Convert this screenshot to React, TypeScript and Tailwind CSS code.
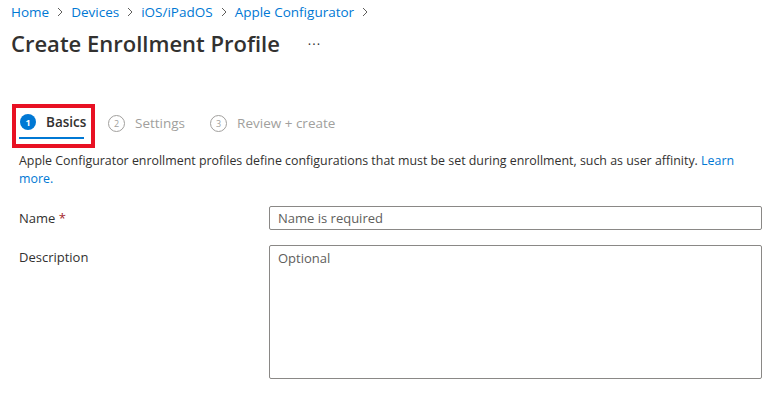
import React from 'react';

const font = { fontFamily: '"Segoe UI", "Open Sans", "Liberation Sans", sans-serif' };

const Chevron = () => (
  <svg width="8" height="10" viewBox="0 0 8 10" className="mx-[7px] text-[#605e5c]">
    <path d="M2 1 L6 5 L2 9" fill="none" stroke="currentColor" strokeWidth="1" />
  </svg>
);

const StepCircle: React.FC<{ n: number; active?: boolean }> = ({ n, active }) =>
  active ? (
    <span className="flex h-[16px] w-[16px] items-center justify-center rounded-full bg-[#0078d4] text-[9px] font-bold text-white">
      {n}
    </span>
  ) : (
    <span className="flex h-[17px] w-[17px] items-center justify-center rounded-full border border-[#a19f9d] text-[9px] text-[#a19f9d]">
      {n}
    </span>
  );

export default function App() {
  const crumbs = ['Home', 'Devices', 'iOS/iPadOS', 'Apple Configurator'];

  return (
    <div className="h-[395px] w-[775px] overflow-hidden bg-white text-[#323130]" style={font}>
      <nav className="flex items-center pl-[11px] pt-[2px] text-[13.5px] text-[#0078d4]">
        {crumbs.map(c => (
          <React.Fragment key={c}>
            <span>{c}</span>
            <Chevron />
          </React.Fragment>
        ))}
      </nav>

      <div className="mt-[6px] flex items-center pl-[11px]">
        <h1 className="text-[22px] font-semibold leading-[30px] text-[#323130]">Create Enrollment Profile</h1>
        <span className="ml-[28px] mt-[2px] text-[13px] tracking-[1px] text-[#323130]">···</span>
      </div>

      <div className="mt-[46px] flex items-center pl-[12px]">
        <div className="h-[44px] w-[83px] border-[4px] border-[#e81123] pl-[3px] pt-[6px]">
          <div className="flex items-center gap-[10px] pl-[1px]">
            <StepCircle n={1} active />
            <span className="text-[13.5px] leading-[16px] font-semibold text-[#323130]">Basics</span>
          </div>
          <div className="mt-[7px] h-[2px] w-[65px] bg-[#0078d4]" />
        </div>
        <div className="ml-[13px] flex items-center gap-[10px] pb-[6px]">
          <StepCircle n={2} />
          <span className="text-[13.5px] text-[#a19f9d]">Settings</span>
        </div>
        <div className="ml-[25px] flex items-center gap-[10px] pb-[6px]">
          <StepCircle n={3} />
          <span className="text-[13.5px] text-[#a19f9d]">Review + create</span>
        </div>
      </div>

      <p className="mt-[4px] pl-[19px] pr-[32px] text-[12.4px] leading-[18px] text-[#323130]">
        Apple Configurator enrollment profiles define configurations that must be set during enrollment, such as user
        affinity. <span className="text-[#0078d4]">Learn more.</span>
      </p>

      <div className="mt-[18px] flex items-center pl-[19px]">
        <label className="w-[250px] text-[13px]">
          Name <span className="text-[#a4262c]">*</span>
        </label>
        <input
          className="h-[24px] w-[493px] rounded-[2px] border border-[#8a8886] px-[8px] text-[13px] placeholder:text-[#605e5c] outline-none"
          placeholder="Name is required"
          style={font}
        />
      </div>

      <div className="mt-[15px] flex items-start pl-[19px]">
        <label className="w-[250px] pt-[3px] text-[13px]">Description</label>
        <textarea
          className="h-[134px] w-[493px] resize-none rounded-[2px] border border-[#8a8886] px-[8px] py-[3px] text-[13px] placeholder:text-[#605e5c] outline-none"
          placeholder="Optional"
          style={font}
        />
      </div>
    </div>
  );
}
